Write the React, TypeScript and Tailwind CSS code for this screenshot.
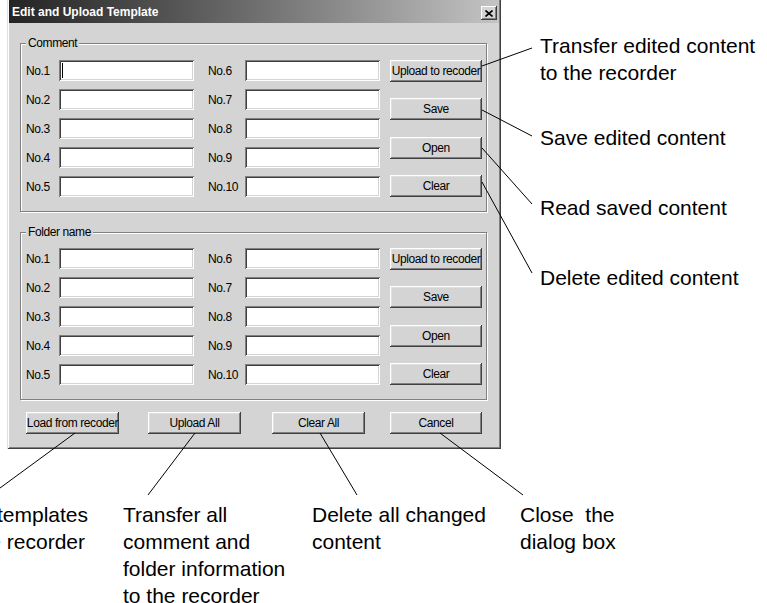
import type { ReactNode } from "react";

const LEFT = ["No.1", "No.2", "No.3", "No.4", "No.5"];
const RIGHT = ["No.6", "No.7", "No.8", "No.9", "No.10"];

function Field({ caret = false }: { caret?: boolean }) {
  return (
    <div className="flex h-[21px] w-[135px] items-start bg-white shadow-[inset_1px_1px_0_#808080,inset_-1px_-1px_0_#fff,inset_2px_2px_0_#404040,inset_-2px_-2px_0_#d4d4d4]">
      {caret && <span className="mt-[3px] ml-[3px] h-[15px] w-px bg-black" />}
    </div>
  );
}

function WinButton({ children, className = "" }: { children: ReactNode; className?: string }) {
  return (
    <div
      className={`flex h-[22px] items-center justify-center bg-[#d4d4d4] text-black shadow-[inset_-1px_-1px_0_#404040,inset_1px_1px_0_#fff,inset_-2px_-2px_0_#808080,inset_2px_2px_0_#dfdfdf] ${className}`}
    >
      {children}
    </div>
  );
}

function Group({ title, rowsTop, caret = false }: { title: string; rowsTop: string; caret?: boolean }) {
  return (
    <div className="w-[467px] border border-[#808080] pr-[4px] pb-[14px] pl-[5px] shadow-[1px_1px_0_#fff,inset_1px_1px_0_#fff]">
      <div className="-mt-[8px] h-[14px] w-fit bg-[#d4d4d4] px-[2px] leading-[14px]">{title}</div>
      <div className={`flex ${rowsTop}`}>
        <div className="flex flex-col gap-[8px]">
          {LEFT.map((l, i) => (
            <div key={l} className="flex items-center">
              <span className="w-[33px]">{l}</span>
              <Field caret={caret && i === 0} />
            </div>
          ))}
        </div>
        <div className="ml-[14px] flex flex-col gap-[8px]">
          {RIGHT.map((l) => (
            <div key={l} className="flex items-center">
              <span className="w-[37px]">{l}</span>
              <Field />
            </div>
          ))}
        </div>
        <div className="ml-[10px] flex w-[92px] flex-col justify-between">
          <WinButton>Upload to recoder</WinButton>
          <WinButton>Save</WinButton>
          <WinButton>Open</WinButton>
          <WinButton>Clear</WinButton>
        </div>
      </div>
    </div>
  );
}

export default function App() {
  return (
    <div className="relative h-[603px] w-[767px] overflow-hidden bg-white font-['Liberation_Sans',Arial,sans-serif] text-black">
      <div className="flex items-start">
        {/* dialog */}
        <div className="ml-[7px] flex h-[449px] w-[494px] flex-col bg-[#d4d4d4] px-[2px] pb-[2px] text-[12px] tracking-[-0.4px] shadow-[inset_1px_0_0_#dfdfdf,inset_-1px_-1px_0_#404040,inset_2px_0_0_#fff,inset_-2px_-2px_0_#808080]">
          <div className="flex h-[23px] justify-between bg-linear-to-r from-[#242424] to-[#c4c4c4] pr-[2px] pl-[3px]">
            <span className="self-center text-[12px] font-bold tracking-normal text-white">Edit and Upload Template</span>
            <div className="mb-[3px] flex h-[14px] w-[16px] items-center justify-center self-end bg-[#d4d4d4] shadow-[inset_-1px_-1px_0_#404040,inset_1px_1px_0_#fff,inset_-2px_-2px_0_#808080]">
              <svg width="8" height="7" viewBox="0 0 8 7">
                <path d="M0.5 0.5L7.5 6.5M7.5 0.5L0.5 6.5" stroke="#000" strokeWidth="1.6" />
              </svg>
            </div>
          </div>
          <div className="flex flex-col pt-[20px] pl-[11px]">
            <Group title="Comment" rowsTop="mt-[10px]" caret />
            <div className="mt-[20px]">
              <Group title="Folder name" rowsTop="mt-[9px]" />
            </div>
            <div className="mt-[12px] flex pl-[6px]">
              <WinButton className="w-[93px]">Load from recoder</WinButton>
              <WinButton className="ml-[29px] w-[93px]">Upload All</WinButton>
              <WinButton className="ml-[31px] w-[93px]">Clear All</WinButton>
              <WinButton className="ml-[25px] w-[92px]">Cancel</WinButton>
            </div>
          </div>
        </div>

        {/* right callouts */}
        <div className="ml-[39px] flex flex-col text-[21px] leading-[27px] whitespace-nowrap">
          <div className="mt-[32px]">
            Transfer edited content
            <br />
            to the recorder
          </div>
          <div className="mt-[38px]">Save edited content</div>
          <div className="mt-[43px]">Read saved content</div>
          <div className="mt-[43px]">Delete edited content</div>
        </div>
      </div>

      {/* bottom callouts */}
      <div className="mt-[52px] flex text-[21px] leading-[27px] whitespace-nowrap">
        <div className="flex w-[88px] shrink-0 flex-col items-end">
          <div>Load templates</div>
          <div className="pr-[3px]">from the recorder</div>
        </div>
        <div className="ml-[35px] w-[189px] shrink-0">
          Transfer all
          <br />
          comment and
          <br />
          folder information
          <br />
          to the recorder
        </div>
        <div className="w-[208px] shrink-0">
          Delete all changed
          <br />
          content
        </div>
        <div className="whitespace-pre">
          {"Close  the"}
          <br />
          dialog box
        </div>
      </div>

      {/* leader lines */}
      <svg className="pointer-events-none absolute inset-0" width="767" height="603" viewBox="0 0 767 603">
        <g stroke="#000" strokeWidth="1" fill="none">
          <line x1="482" y1="66" x2="532" y2="48" />
          <line x1="482" y1="110" x2="532" y2="136" />
          <line x1="482" y1="148" x2="532" y2="204" />
          <line x1="482" y1="182" x2="532" y2="273" />
          <line x1="75" y1="433" x2="0" y2="488" />
          <line x1="195" y1="433" x2="148" y2="495" />
          <line x1="320" y1="433" x2="357" y2="495" />
          <line x1="440" y1="433" x2="523" y2="495" />
        </g>
      </svg>
    </div>
  );
}
